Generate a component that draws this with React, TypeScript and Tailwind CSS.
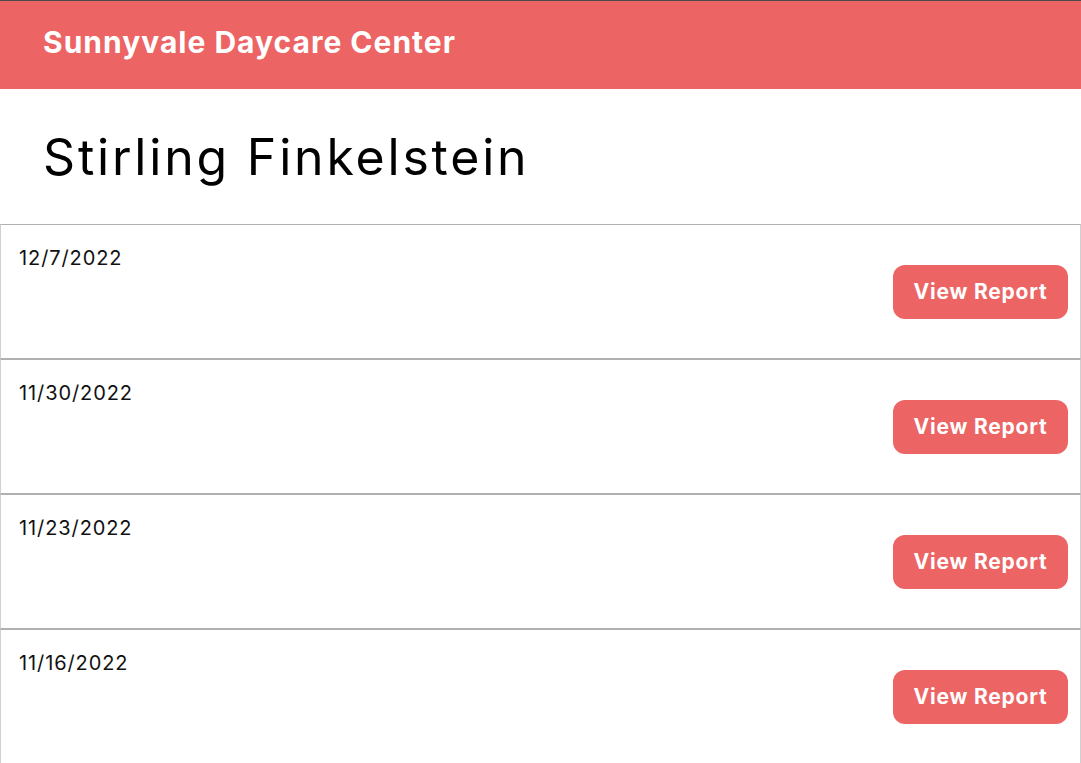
import React from "react";

const dates = ["12/7/2022", "11/30/2022", "11/23/2022", "11/16/2022"];

export default function App() {
  return (
    <div className="min-h-screen bg-white" style={{ fontFamily: "Inter, 'Noto Sans', sans-serif" }}>
      <header className="h-[89px] border-t border-[#4a4a4a] bg-[#ec6464] flex items-center px-[43px] pb-[6px]">
        <h1 className="text-[30px] font-bold text-white tracking-[1px]">Sunnyvale Daycare Center</h1>
      </header>
      <div className="h-[135px] flex items-center px-[43px]">
        <h2 className="text-[50px] text-black font-normal leading-none tracking-[2.8px]">Stirling Finkelstein</h2>
      </div>
      <div>
        {dates.map((d) => (
          <div
            key={d}
            className="h-[135px] border border-[#b0b0b0] border-l-[#d0d0d0] border-r-[#d0d0d0] flex justify-between items-center pl-[18px] pr-[12px]"
          >
            <div className="self-start pt-[21px] text-[20px] text-[#111] leading-[24px] tracking-[0.9px]">{d}</div>
            <button className="w-[175px] h-[54px] rounded-[12px] bg-[#ec6464] text-white text-[21px] font-bold tracking-[0.8px]">
              View Report
            </button>
          </div>
        ))}
      </div>
    </div>
  );
}
